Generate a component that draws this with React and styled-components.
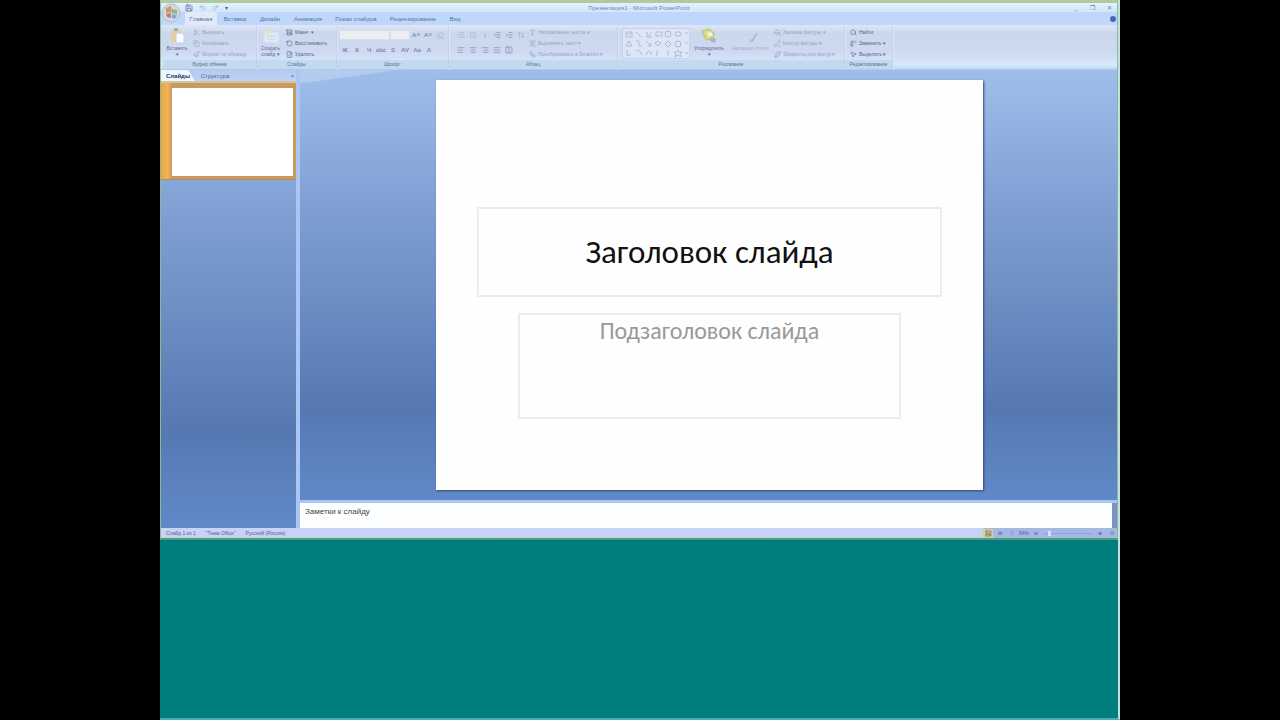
import React from "react";
import styled, { createGlobalStyle } from "styled-components";
import {
  Scissors, Copy, Paintbrush, LayoutTemplate, RotateCcw, FileX, List, ListOrdered,
  IndentDecrease, IndentIncrease, ArrowUpDown, AlignLeft, AlignCenter, AlignRight,
  AlignJustify, Columns2, Type, AlignVerticalSpaceAround, Workflow, PaintBucket,
  PenLine, Sparkles, Search, Replace, MousePointer2, Eraser, Save, Undo2, Redo2,
} from "lucide-react";

const Global = createGlobalStyle`
  * { box-sizing: border-box; }
  body { margin: 0; background: #000; font-family: "Liberation Sans", Arial, sans-serif; }
  button, input, select { font: inherit; color: inherit; margin: 0; padding: 0; border: 0; background: none; border-radius: 0; }
  h1, p { margin: 0; }
`;

const Screen = styled.main`
  width: 75%;
  min-height: 100vh;
  margin: 0 auto;
  display: flex;
  flex-direction: column;
  background: #007d7d;
  border-right: 2px solid #c2e0dc;
  border-bottom: 2px solid #4fa9ad;
`;
const Window = styled.section`
  position: relative;
  display: flex;
  flex-direction: column;
  height: 75vh;
  border: 1px solid #8db69c;
  border-top: 3px solid #b1c8a1;
  border-bottom: 2px solid #549b7d;
  background: #a9c3f2;
`;
const TitleBar = styled.header`
  height: 9px;
  flex: none;
  display: grid;
  grid-template-columns: 1fr auto 1fr;
  align-items: center;
  background: linear-gradient(#e2f1fa, #d2e6fd);
  color: #7084b4;
  font-size: 6px;
  line-height: 8px;
`;
const QuickAccess = styled.div`
  display: flex;
  align-items: center;
  gap: 6px;
  padding-left: 24px;
  color: #8ea3c9;
`;
const QuickButton = styled.button`
  display: flex;
  color: ${(p) => (p.$strong ? "#4b5c86" : "#93a7ca")};
`;
const WindowButtons = styled.div`
  display: flex;
  justify-content: flex-end;
  gap: 10px;
  padding-right: 4px;
  color: #66779b;
`;
const MiniButton = styled.button`
  width: 7px;
  display: flex;
  justify-content: center;
  align-items: center;
`;
const Orb = styled.button`
  position: absolute;
  left: 0;
  top: 0;
  width: 21px;
  height: 21px;
`;
const TabRow = styled.nav`
  height: 13px;
  flex: none;
  display: flex;
  align-items: stretch;
  padding-left: 24px;
  background: #bfd7fb;
  color: #5872a9;
  font-size: 6px;
`;
const RibbonTab = styled.button`
  width: ${(p) => p.$w}px;
  flex: none;
  background: ${(p) => (p.$active ? "#e2eafa" : "transparent")};
  border-radius: 2px 2px 0 0;
  text-align: center;
  white-space: nowrap;
`;
const HelpButton = styled(MiniButton)`
  margin-left: auto;
  width: 8px;
  color: #4964bd;
`;
const Ribbon = styled.div`
  height: 45px;
  flex: none;
  display: flex;
  padding: 2px 0 0 2px;
  background: linear-gradient(#dce6f7 0, #cbd8ec 18%, #cdd9f0 60%, #d9e8fa 88%, #c8e3f6 95%, #a9c0e6 100%);
  color: #66779d;
  font-size: 5px;
  line-height: 7px;
`;
const Group = styled.section`
  width: ${(p) => p.$w}px;
  flex: none;
  display: flex;
  flex-direction: column;
  border-right: 1px solid #c3d1e9;
  box-shadow: 1px 0 #dae5f7;
`;
const GroupBody = styled.div`
  height: 33px;
  display: flex;
  flex-direction: ${(p) => (p.$stack ? "column" : "row")};
  padding-left: ${(p) => (p.$pad ? 4 : 0)}px;
`;
const Caption = styled.p`
  height: 9px;
  line-height: 9px;
  text-align: center;
  background: #c2d9ef;
  color: #607394;
`;
const BigButton = styled.button`
  width: ${(p) => p.$w}px;
  flex: none;
  display: flex;
  flex-direction: column;
  align-items: center;
  line-height: 6px;
  color: ${(p) => (p.$dim ? "#a3b0cb" : "#5a6b90")};
`;
const ItemList = styled.div`
  display: flex;
  flex-direction: column;
  padding-left: ${(p) => p.$left || 2}px;
`;
const Item = styled.button`
  height: 11px;
  display: flex;
  align-items: center;
  gap: 2px;
  white-space: nowrap;
  color: ${(p) => (p.$dim ? "#94a3c2" : "#566789")};
`;
const ToolRow = styled.div`
  height: 15px;
  display: flex;
  align-items: center;
  padding: 1px 0 0 2px;
`;
const Tool = styled.button`
  width: 12px;
  height: 10px;
  display: flex;
  align-items: center;
  justify-content: center;
  font-size: 6px;
  font-weight: bold;
  color: ${(p) => (p.$dim ? "#a3b1cd" : "#7b8bae")};
`;
const FontField = styled.input`
  width: ${(p) => p.$w}px;
  height: 10px;
  background: #eceef0;
  border: 1px solid #d5deec;
`;
const Gallery = styled.div`
  width: 68px;
  height: 31px;
  flex: none;
  margin: 1px 0 0 4px;
  background: #dce6f7;
  border: 1px solid #c6d4eb;
`;
const Workspace = styled.div`
  flex: 1;
  min-height: 0;
  display: grid;
  grid-template-columns: 135px 1fr;
  column-gap: 4px;
  background: #abc6f4;
`;
const fill = "linear-gradient(#9fbde8 0, #99b7e5 8%, #84a3d7 27%, #6e90c5 51%, #5578b2 79%, #5b82bd 90%, #6089c9 100%)";
const SidePane = styled.aside`
  display: flex;
  flex-direction: column;
  background: ${fill};
`;
const SideTabs = styled.div`
  height: 11px;
  flex: none;
  display: flex;
  align-items: stretch;
  background: linear-gradient(#b4cbef, #bfd1f4);
  font-size: 6px;
  color: #4d6697;
`;
const SideTab = styled.button`
  width: ${(p) => (p.$active ? 34 : 40)}px;
  background: ${(p) => (p.$active ? "#edf5fd" : "transparent")};
  color: ${(p) => (p.$active ? "#26375f" : "inherit")};
  font-weight: ${(p) => (p.$active ? "bold" : "normal")};
  clip-path: polygon(0 0, 80% 0, 100% 100%, 0 100%);
`;
const SideClose = styled(MiniButton)`
  margin-left: auto;
`;
const Thumb = styled.button`
  flex: none;
  height: 99px;
  padding: 5px 3px 3px 11px;
  background: linear-gradient(90deg, #eda63d 0, #f2b25a 5%, #c79a63 8%, #c9985c 100%);
  border-top: 2px solid #d3c5a0;
  border-bottom: 1px solid #b58c5c;
  display: flex;
`;
const ThumbSlide = styled.span`
  flex: 1;
  align-self: stretch;
  background: #fff;
`;
const EditPane = styled.div`
  min-width: 0;
  display: flex;
  flex-direction: column;
  gap: 3px;
`;
const Stage = styled.div`
  flex: 1;
  min-height: 0;
  display: flex;
  justify-content: center;
  align-items: flex-start;
  padding: 10px 0 0 2px;
  background: linear-gradient(172deg, #b7cdf0 0, #b3caef 13px, transparent 14px) no-repeat 0 0 / 110px 20px, ${fill};
`;
const Slide = styled.article`
  width: 67%;
  aspect-ratio: 4 / 3;
  display: flex;
  flex-direction: column;
  align-items: center;
  gap: 16px;
  padding-top: 127px;
  background: #fefefe;
  box-shadow: 1px 1px 2px #34496f;
`;
const TitleBox = styled.h1`
  width: 85%;
  height: 90px;
  display: flex;
  align-items: center;
  justify-content: center;
  border: 2px solid #ececec;
  font: 400 33px/40px Carlito, "Noto Sans", sans-serif;
  color: #111;
`;
const SubtitleBox = styled.p`
  width: 70%;
  height: 106px;
  padding-top: 2px;
  border: 2px solid #ececec;
  text-align: center;
  font: 400 24px/28px Carlito, "Noto Sans", sans-serif;
  color: #999;
`;
const Notes = styled.div`
  height: 25px;
  flex: none;
  padding: 4px 5px;
  background: #fdfeff;
  border-right: 5px solid #7c93c9;
  font-size: 8px;
  line-height: 9px;
  color: #444;
`;
const StatusBar = styled.footer`
  height: 10px;
  flex: none;
  display: flex;
  align-items: center;
  gap: 10px;
  padding-left: 5px;
  background: linear-gradient(#c8d5f5, #c2d3f0);
  color: #50628f;
  font-size: 5px;
  line-height: 8px;
`;
const ViewControls = styled.div`
  margin-left: auto;
  width: 134px;
  align-self: stretch;
  display: flex;
  align-items: center;
  gap: 2px;
  background: #a3b8e4;
`;
const ViewButton = styled.button`
  width: 10px;
  height: 9px;
  display: flex;
  align-items: center;
  justify-content: center;
  background: ${(p) => (p.$active ? "#dcd08c" : "transparent")};
`;
const Zoom = styled.input`
  appearance: none;
  flex: 1;
  min-width: 0;
  height: 5px;
  &::-webkit-slider-runnable-track { height: 1px; background: #8fa5d6; }
  &::-webkit-slider-thumb { appearance: none; width: 3px; height: 5px; margin-top: -2px; background: #d6e1f6; }
`;

const tabs = [
  ["Главная", 32], ["Вставка", 36], ["Дизайн", 34], ["Анимация", 42],
  ["Показ слайдов", 54], ["Рецензирование", 60], ["Вид", 24],
];

function Items({ list, dim, left }) {
  return (
    <ItemList $left={left}>
      {list.map(([Icon, text]) => (
        <Item key={text} $dim={dim}><Icon size={7} />{text}</Item>
      ))}
    </ItemList>
  );
}
function Tools({ list, dim }) {
  return list.map((Icon, i) => (
    <Tool key={i} $dim={dim} aria-label={`tool ${i + 1}`}>
      {typeof Icon === "string" ? Icon : <Icon size={8} />}
    </Tool>
  ));
}

const OfficeLogo = () => (
  <svg width="21" height="21" viewBox="0 0 21 21">
    <circle cx="10" cy="10" r="9" fill="#ced9e8" stroke="#aebed3" />
    <path d="M5 5l5-2 1 6-6 1z" fill="#d9936f" />
    <path d="M11 6l5 1v4l-5-1z" fill="#9db377" />
    <path d="M5 11l5-1v5l-4-1z" fill="#c57e67" />
    <path d="M11 11l5 1-2 4-3-1z" fill="#87a5d3" />
  </svg>
);
const PasteIcon = () => (
  <svg width="18" height="18" viewBox="0 0 18 18">
    <rect x="3" y="3" width="10" height="12" rx="1" fill="#e5cf9e" />
    <rect x="6" y="1" width="4" height="3" fill="#98a9c2" />
    <path d="M8 6h6l2 2v8H8z" fill="#f8fbff" stroke="#c3cede" />
  </svg>
);
const NewSlideIcon = () => (
  <svg width="20" height="18" viewBox="0 0 20 18">
    <rect x="3" y="5" width="15" height="11" fill="#e0e9f5" stroke="#cdd9eb" />
    <path d="M6 1l1 3 3 1-3 1-1 3-1-3-3-1 3-1z" fill="#e9e98f" />
    <path d="M6 9h9M6 12h9" stroke="#c8d4e6" />
  </svg>
);
const ArrangeIcon = () => (
  <svg width="20" height="18" viewBox="0 0 20 18">
    <path d="M3 4l7-2 5 4-1 6-7 1z" fill="#d8dc88" stroke="#b7bd78" />
    <path d="M8 6l4-1 2 3-4 2z" fill="#f2f4d2" />
    <path d="M12 10l5 2-1 4-5-2z" fill="#a6b3c8" />
  </svg>
);
const StylesIcon = () => (
  <svg width="20" height="18" viewBox="0 0 20 18">
    <path d="M9 13l3 3 6-9-2-1-4 6z" fill="#b0bed9" />
  </svg>
);
const ShapeGallery = () => (
  <svg width="66" height="29" viewBox="0 0 66 29" fill="none" stroke="#afbad6">
    <rect x="3" y="3" width="6" height="5" /><path d="M4 5h4M13 3l5 5M24 3v5h5M24 8l5-5" />
    <rect x="33" y="3" width="6" height="4" /><circle cx="45" cy="5" r="3" /><rect x="52" y="3" width="6" height="4" rx="2" />
    <path d="M3 17l3-5 3 5zM13 12h3v5h3M23 12l5 5M28 14v3h-3M35 12l3 2-3 3-3-3zM45 12l3 3-3 3-3-3z" />
    <circle cx="55" cy="15" r="3" />
    <path d="M4 21v6l4-2M13 21q5 0 6 5M23 26q3-8 6 0M35 21q-2 1-1 3 1 2-1 3M44 21q2 1 1 3-1 2 1 3" />
    <path d="M55 21l1 2h3l-2 2 1 3-3-2-3 2 1-3-2-2h3z" />
    <path d="M62 4h3M62 14h3M62 24h3" />
  </svg>
);

export default function App() {
  return (
    <>
      <Global />
      <Screen>
        <Window>
          <TitleBar>
            <QuickAccess>
              <QuickButton $strong aria-label="Сохранить"><Save size={8} /></QuickButton>
              <QuickButton aria-label="Отменить"><Undo2 size={7} /></QuickButton>
              <QuickButton aria-label="Вернуть"><Redo2 size={7} /></QuickButton>
              <QuickButton $strong aria-label="Настройка">▾</QuickButton>
            </QuickAccess>
            <span>Презентация1 - Microsoft PowerPoint</span>
            <WindowButtons>
              <MiniButton aria-label="Свернуть">_</MiniButton>
              <MiniButton aria-label="Развернуть">❐</MiniButton>
              <MiniButton aria-label="Закрыть">✕</MiniButton>
            </WindowButtons>
          </TitleBar>
          <TabRow>
            {tabs.map(([name, w], i) => <RibbonTab key={name} $w={w} $active={i === 0}>{name}</RibbonTab>)}
            <HelpButton aria-label="Справка">
              <svg width="8" height="8" viewBox="0 0 8 8"><circle cx="4" cy="4" r="3" fill="currentColor" /></svg>
            </HelpButton>
          </TabRow>
          <Orb aria-label="Office"><OfficeLogo /></Orb>
          <Ribbon>
            <Group $w={94}>
              <GroupBody>
                <BigButton $w={28}><PasteIcon />Вставить<span>▾</span></BigButton>
                <Items dim list={[[Scissors, "Вырезать"], [Copy, "Копировать"], [Paintbrush, "Формат по образцу"]]} />
              </GroupBody>
              <Caption>Буфер обмена</Caption>
            </Group>
            <Group $w={80}>
              <GroupBody>
                <BigButton $w={27}><NewSlideIcon />Создать<span>слайд ▾</span></BigButton>
                <Items list={[[LayoutTemplate, "Макет ▾"], [RotateCcw, "Восстановить"], [FileX, "Удалить"]]} />
              </GroupBody>
              <Caption>Слайды</Caption>
            </Group>
            <Group $w={112}>
              <GroupBody $stack>
                <ToolRow>
                  <FontField $w={51} aria-label="Шрифт" /><FontField $w={20} aria-label="Размер шрифта" />
                  <Tools list={["A˄", "A˅"]} /><Tools dim list={[Eraser]} />
                </ToolRow>
                <ToolRow>
                  <Tools list={["Ж", "К", "Ч", "abc", "S", "AV", "Aa", "A"]} />
                </ToolRow>
              </GroupBody>
              <Caption>Шрифт</Caption>
            </Group>
            <Group $w={169}>
              <GroupBody $pad>
                <div>
                  <ToolRow>
                    <Tools dim list={[List, ListOrdered]} />
                    <Tools dim list={["|"]} />
                    <Tools list={[IndentDecrease, IndentIncrease]} />
                    <Tools dim list={[ArrowUpDown]} />
                  </ToolRow>
                  <ToolRow>
                    <Tools list={[AlignLeft, AlignCenter, AlignRight, AlignJustify, Columns2]} />
                  </ToolRow>
                </div>
                <Items dim list={[[Type, "Направление текста ▾"], [AlignVerticalSpaceAround, "Выровнять текст ▾"], [Workflow, "Преобразовать в SmartArt ▾"]]} />
              </GroupBody>
              <Caption>Абзац</Caption>
            </Group>
            <Group $w={227}>
              <GroupBody>
                <Gallery aria-label="Фигуры"><ShapeGallery /></Gallery>
                <BigButton $w={38}><ArrangeIcon />Упорядочить<span>▾</span></BigButton>
                <BigButton $w={44} $dim><StylesIcon />Экспресс-стили</BigButton>
                <Items dim list={[[PaintBucket, "Заливка фигуры ▾"], [PenLine, "Контур фигуры ▾"], [Sparkles, "Эффекты для фигур ▾"]]} />
              </GroupBody>
              <Caption>Рисование</Caption>
            </Group>
            <Group $w={48}>
              <GroupBody>
                <Items list={[[Search, "Найти"], [Replace, "Заменить ▾"], [MousePointer2, "Выделить ▾"]]} left={5} />
              </GroupBody>
              <Caption>Редактирование</Caption>
            </Group>
          </Ribbon>
          <Workspace>
            <SidePane>
              <SideTabs>
                <SideTab $active>Слайды</SideTab>
                <SideTab>Структура</SideTab>
                <SideClose aria-label="Закрыть панель">×</SideClose>
              </SideTabs>
              <Thumb aria-label="Слайд 1"><ThumbSlide /></Thumb>
            </SidePane>
            <EditPane>
              <Stage>
                <Slide>
                  <TitleBox>Заголовок слайда</TitleBox>
                  <SubtitleBox>Подзаголовок слайда</SubtitleBox>
                </Slide>
              </Stage>
              <Notes>Заметки к слайду</Notes>
            </EditPane>
          </Workspace>
          <StatusBar>
            <span>Слайд 1 из 1</span><span>"Тема Office"</span><span>Русский (Россия)</span>
            <ViewControls>
              <ViewButton $active aria-label="Обычный"><LayoutTemplate size={7} /></ViewButton>
              <ViewButton aria-label="Сортировщик">⊞</ViewButton>
              <ViewButton aria-label="Показ">▽</ViewButton>
              <span>54%</span>
              <ViewButton aria-label="Уменьшить">⊖</ViewButton>
              <Zoom type="range" min="10" max="400" defaultValue="54" aria-label="Масштаб" />
              <ViewButton aria-label="Увеличить">⊕</ViewButton>
              <ViewButton aria-label="Вписать">⊡</ViewButton>
            </ViewControls>
          </StatusBar>
        </Window>
      </Screen>
    </>
  );
}
